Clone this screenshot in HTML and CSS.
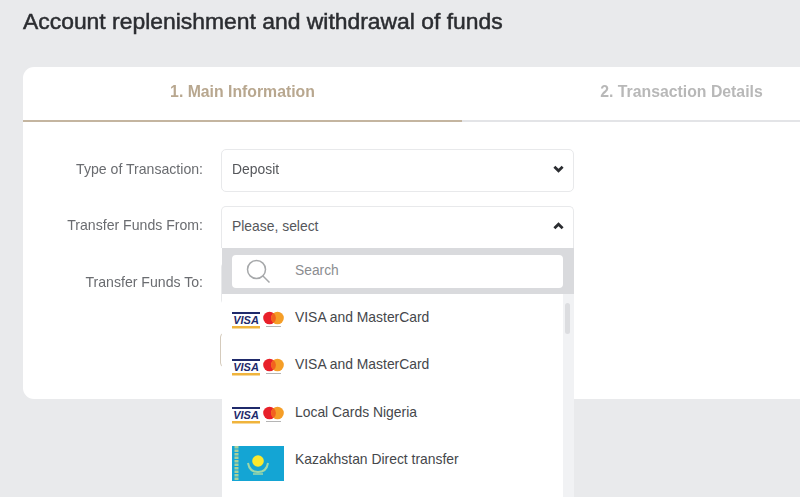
FILE: index.html
```html
<!DOCTYPE html>
<html>
	<head>
		<title>Account replenishment and withdrawal of funds</title>
		<link rel="stylesheet" href="styles.css">
	</head>
	<body>
		<h1 class="page_title">Account replenishment and withdrawal of funds</h1>

		<div class="card">
			<div class="tabs">
				<div class="tab tab_active">1. Main Information</div>
				<div class="tab">2. Transaction Details</div>
			</div>

			<div class="form">
				<div class="row">
					<div class="label">Type of Transaction:</div>
					<div class="select">
						<span>Deposit</span>
						<svg class="chevron" viewBox="0 0 12 8"><path d="M1.5 1.500 6 6l4.500-4.500" /></svg>
					</div>
				</div>

				<div class="row">
					<div class="label">Transfer Funds From:</div>
					<div class="select_wrap">
						<div class="select select_open">
							<span>Please, select</span>
							<svg class="chevron" viewBox="0 0 12 8"><path d="M1.5 6.500 6 2l4.500 4.500" /></svg>
						</div>

						<div class="dropdown">
							<div class="search_bar">
								<div class="search_box">
									<svg class="search_icon" viewBox="0 0 24 24"><circle cx="10.500" cy="10.500" r="9" /><path d="M17 17l6.500 6.500" /></svg>
									<span>Search</span>
								</div>
							</div>
							<div class="list">
								<div class="option">
									<svg class="pay_icon" viewBox="0 0 52 24">
										<rect x="0" y="6" width="28" height="2" fill="#1f2a6b" />
										<rect x="0" y="20" width="28" height="2.500" fill="#f0b43c" />
										<text x="14" y="18" class="visa_text">VISA</text>
										<circle cx="37.500" cy="12" r="6.300" fill="#e8202a" />
										<circle cx="45.500" cy="12" r="6.300" fill="#f59e27" />
										<path d="M41.500 7a6.300 6.300 0 0 1 0 10a6.300 6.300 0 0 1 0-10z" fill="#f2621f" />
										<rect x="34" y="20" width="15" height="1" fill="#b5b5b5" />
									</svg>
									<span>VISA and MasterCard</span>
								</div>
								<div class="option">
									<svg class="pay_icon" viewBox="0 0 52 24">
										<rect x="0" y="6" width="28" height="2" fill="#1f2a6b" />
										<rect x="0" y="20" width="28" height="2.500" fill="#f0b43c" />
										<text x="14" y="18" class="visa_text">VISA</text>
										<circle cx="37.500" cy="12" r="6.300" fill="#e8202a" />
										<circle cx="45.500" cy="12" r="6.300" fill="#f59e27" />
										<path d="M41.500 7a6.300 6.300 0 0 1 0 10a6.300 6.300 0 0 1 0-10z" fill="#f2621f" />
										<rect x="34" y="20" width="15" height="1" fill="#b5b5b5" />
									</svg>
									<span>VISA and MasterCard</span>
								</div>
								<div class="option">
									<svg class="pay_icon" viewBox="0 0 52 24">
										<rect x="0" y="6" width="28" height="2" fill="#1f2a6b" />
										<rect x="0" y="20" width="28" height="2.500" fill="#f0b43c" />
										<text x="14" y="18" class="visa_text">VISA</text>
										<circle cx="37.500" cy="12" r="6.300" fill="#e8202a" />
										<circle cx="45.500" cy="12" r="6.300" fill="#f59e27" />
										<path d="M41.500 7a6.300 6.300 0 0 1 0 10a6.300 6.300 0 0 1 0-10z" fill="#f2621f" />
										<rect x="34" y="20" width="15" height="1" fill="#b5b5b5" />
									</svg>
									<span>Local Cards Nigeria</span>
								</div>
								<div class="option">
									<svg class="flag_icon" viewBox="0 0 52 35">
										<rect width="52" height="35" fill="#14a5d4" />
										<path d="M4.500 0v35" stroke="#a8d09a" stroke-width="4" stroke-dasharray="2.500 1" />
										<circle cx="26" cy="15" r="5.800" fill="#fbe92e" />
										<path d="M16 17c1 6 5 9 10 9s9-3 10-9" fill="none" stroke="#9fd8a8" stroke-width="2" />
										<path d="M21 28h10" stroke="#9fd8a8" stroke-width="1.500" />
									</svg>
									<span>Kazakhstan Direct transfer</span>
								</div>
							</div>
							<div class="scroll_track"><div class="scroll_thumb"></div></div>
						</div>
					</div>
				</div>

				<div class="row">
					<div class="label">Transfer Funds To:</div>
					<div class="select"></div>
				</div>

				<div class="row row_btn">
					<div class="label"></div>
					<div class="next_btn"></div>
				</div>
			</div>
		</div>
	</body>
</html>
```

FILE: styles.css
```css
html, body {
	margin: 0;
	height: 497px;
	overflow: hidden;
}
body {
	background-color: #e9eaec;
	font-family: "Liberation Sans", Arial, sans-serif;
	color: #3c3e42;
}
.page_title {
	margin: 0;
	padding: 9px 0 0 23px;
	height: 67px;
	box-sizing: border-box;
	font-size: 22.900px;
	line-height: 24px;
	font-weight: normal;
	color: #2b2d31;
	-webkit-text-stroke: 0.5px #2b2d31;
	white-space: nowrap;
	filter: blur(0.4px);
}
.card {
	margin-left: 23px;
	width: 777px;
	height: 332px;
	background-color: #fff;
	border-radius: 11px 0 0 11px;
	filter: blur(0.4px);
}
.tabs {
	display: flex;
	height: 55px;
	overflow: hidden;
}
.tab {
	flex: 0 0 439px;
	text-align: center;
	font-size: 15.800px;
	font-weight: bold;
	line-height: 50px;
	color: #b8b8b8;
	border-bottom: 2px solid #e3e4e7;
}
.tab_active {
	color: #b8a78f;
	border-bottom-color: #c4b5a0;
}
.form {
	padding-top: 27px;
	display: flex;
	flex-direction: column;
	gap: 14px;
}
.row {
	display: flex;
	align-items: center;
	gap: 18px;
}
.label {
	width: 180px;
	padding-bottom: 4px;
	text-align: right;
	font-size: 14.100px;
	color: #6a6c70;
}
.select {
	width: 353px;
	height: 43px;
	box-sizing: border-box;
	padding: 0 9px 4px 10px;
	display: flex;
	align-items: center;
	justify-content: space-between;
	background-color: #fff;
	border: 1.500px solid #e8e9eb;
	border-radius: 5px;
	font-size: 13.900px;
	color: #55575b;
}
.select_wrap {
	position: relative;
	width: 353px;
	height: 42px;
}
.select_open {
	height: 42px;
	border-bottom: none;
	border-radius: 5px 5px 0 0;
}
.chevron {
	width: 11px;
	height: 8px;
	fill: none;
	stroke: #2b2d31;
	stroke-width: 3;
}
.dropdown {
	position: absolute;
	left: 1px;
	top: 42px;
	width: 352px;
	height: 249px;
	background-color: #fff;
	z-index: 5;
}
.search_bar {
	height: 46px;
	box-sizing: border-box;
	padding: 7px 11px 6px 10px;
	background-color: #d9dadd;
}
.search_box {
	height: 33px;
	box-sizing: border-box;
	padding-bottom: 2px;
	display: flex;
	align-items: center;
	background-color: #fff;
	border-radius: 4px;
	font-size: 13.800px;
	color: #8b8d90;
}
.search_icon {
	margin-left: 14px;
	margin-right: 25px;
	width: 24px;
	height: 24px;
	fill: none;
	stroke: #a6a8aa;
	stroke-width: 1.500;
}
.option {
	display: flex;
	align-items: center;
	height: 47.500px;
	padding-left: 10px;
	gap: 11px;
	font-size: 13.900px;
	color: #45474b;
}
.option span {
	padding-bottom: 2px;
}
.pay_icon {
	width: 52px;
	height: 24px;
}
.flag_icon {
	width: 52px;
	height: 35px;
	margin-top: 7px;
}
.visa_text {
	font-size: 11px;
	font-weight: bold;
	font-style: italic;
	fill: #1f2a6b;
	text-anchor: middle;
}
.scroll_track {
	position: absolute;
	right: 0;
	top: 46px;
	bottom: 0;
	width: 11px;
	background-color: #f1f2f4;
}
.scroll_thumb {
	margin: 9px 0 0 2px;
	width: 5px;
	height: 31px;
	background-color: #dcdde0;
	border-radius: 3px;
}
.row_btn {
	margin-top: 14px;
}
.next_btn {
	width: 120px;
	height: 34px;
	box-sizing: border-box;
	border: 1.500px solid #d5cbbc;
	border-radius: 4px;
	margin-left: -1px;
}
```
